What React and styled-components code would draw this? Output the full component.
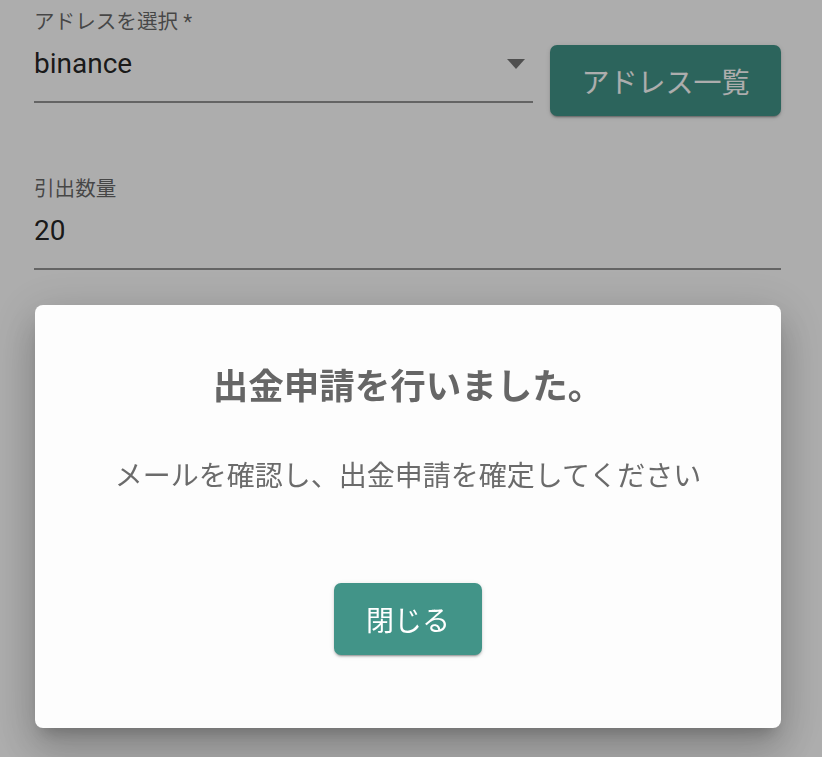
import styled, { createGlobalStyle } from "styled-components";

const GlobalStyle = createGlobalStyle`
  html, body {
    margin: 0;
    padding: 0;
    background: #ffffff;
    font-family: Roboto, "Noto Sans CJK JP", sans-serif;
  }
`;

const App = () => {
  return (
    <>
      <GlobalStyle />
      <Page>
        <Row>
          <Field grow>
            <Label>アドレスを選択 *</Label>
            <Input>
              <span>binance</span>
              <Arrow />
            </Input>
          </Field>
          <Button wide>アドレス一覧</Button>
        </Row>

        <Field spaced>
          <Label>引出数量</Label>
          <Input>
            <span>20</span>
          </Input>
        </Field>
      </Page>

      <Overlay>
        <Dialog>
          <Title>出金申請を行いました。</Title>
          <Message>メールを確認し、出金申請を確定してください</Message>
          <Button>閉じる</Button>
        </Dialog>
      </Overlay>
    </>
  );
};

export default App;

const Page = styled.div`
  min-height: 757px;
  box-sizing: border-box;
  padding: 12px 41px 0 34px;
`;

const Row = styled.div`
  display: flex;
  align-items: flex-start;
  gap: 17px;

  button {
    margin-top: 33px;
  }
`;

const Field = styled.div`
  display: flex;
  flex-direction: column;
  flex: ${({ grow }) => (grow ? "1" : "none")};
  margin-top: ${({ spaced }) => (spaced ? "63px" : "0")};
`;

const Label = styled.label`
  font-size: 20.6px;
  line-height: 20px;
  color: rgba(0, 0, 0, 0.6);
`;

const Input = styled.div`
  display: flex;
  align-items: center;
  justify-content: space-between;
  margin-top: 16px;
  padding-bottom: 21px;
  font-size: 28px;
  line-height: 32px;
  color: rgba(0, 0, 0, 0.87);
  border-bottom: 2px solid rgba(0, 0, 0, 0.42);
`;

const Arrow = styled.i`
  width: 0;
  height: 0;
  margin-right: 8px;
  border-left: 9px solid transparent;
  border-right: 9px solid transparent;
  border-top: 10px solid rgba(0, 0, 0, 0.54);
`;

const Button = styled.button`
  flex: none;
  width: ${({ wide }) => (wide ? "231px" : "148px")};
  height: ${({ wide }) => (wide ? "71px" : "72px")};
  border: none;
  border-radius: 7px;
  background: #429488;
  color: #ffffff;
  font-family: Roboto, "Noto Sans CJK JP", sans-serif;
  font-size: 28px;
  box-shadow: 0 3px 1px -2px rgba(0, 0, 0, 0.2), 0 2px 2px 0 rgba(0, 0, 0, 0.14),
    0 1px 5px 0 rgba(0, 0, 0, 0.12);
  cursor: pointer;
`;

const Overlay = styled.div`
  position: fixed;
  inset: 0;
  background: rgba(0, 0, 0, 0.32);
  display: flex;
  align-items: flex-end;
  justify-content: center;
  padding: 0 41px 29px 35px;
`;

const Dialog = styled.div`
  width: 746px;
  height: 423px;
  box-sizing: border-box;
  background: #fdfdfd;
  border-radius: 8px;
  display: flex;
  flex-direction: column;
  align-items: center;
  padding-top: 62px;
  box-shadow: 0 11px 15px -7px rgba(0, 0, 0, 0.2), 0 24px 38px 3px rgba(0, 0, 0, 0.14),
    0 9px 46px 8px rgba(0, 0, 0, 0.12);

  button {
    margin-top: 86px;
  }
`;

const Title = styled.h2`
  margin: 0;
  font-size: 35.5px;
  line-height: 40px;
  font-weight: 700;
  color: #666666;
`;

const Message = styled.p`
  margin: 50px 0 0;
  font-size: 28px;
  line-height: 40px;
  color: #6b6b6b;
`;
